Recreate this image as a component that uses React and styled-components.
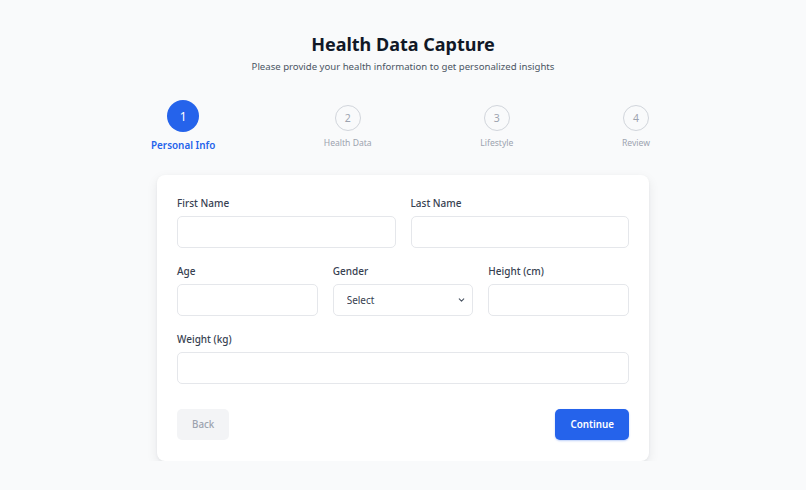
import React from "react";
import styled, { createGlobalStyle, css } from "styled-components";
import { ChevronDown } from "lucide-react";

const GlobalStyle = createGlobalStyle`
  html, body {
    margin: 0;
    padding: 0;
    background: #f9fafb;
    font-family: "Noto Sans", "Open Sans", sans-serif;
    color: #111827;
  }
  * { box-sizing: border-box; }
`;

const Page = styled.div`
  width: 492px;
  margin: 0 auto;
  padding-top: 31px;
`;

const Header = styled.header`
  text-align: center;
`;

const Title = styled.h1`
  margin: 0;
  font-size: 18px;
  line-height: 26px;
  font-weight: 700;
  color: #111827;
`;

const Subtitle = styled.p`
  margin: 2px 0 0;
  font-size: 9.6px;
  line-height: 16px;
  color: #4b5563;
`;

const Stepper = styled.div`
  display: flex;
  justify-content: space-between;
  align-items: center;
  margin: 25px -1px 0 -6px;
`;

const Step = styled.div`
  display: flex;
  flex-direction: column;
  align-items: center;
  gap: 5px;
`;

const Circle = styled.div`
  width: 26px;
  height: 26px;
  border-radius: 50%;
  border: 1.5px solid #d1d5db;
  color: #9ca3af;
  font-size: 10.5px;
  display: flex;
  align-items: center;
  justify-content: center;
  ${(props) =>
    props.active &&
    css`
      width: 32px;
      height: 32px;
      border: none;
      background: #2563eb;
      color: #fff;
      font-size: 12px;
    `}
`;

const StepLabel = styled.div`
  font-size: 8.6px;
  line-height: 14px;
  color: #9ca3af;
  white-space: nowrap;
  ${(props) =>
    props.active &&
    css`
      font-size: 9.9px;
      line-height: 17px;
      font-weight: 600;
      color: #2563eb;
    `}
`;

const Card = styled.form`
  margin-top: 21px;
  background: #fff;
  border-radius: 8px;
  box-shadow: 0 4px 12px rgba(17, 24, 39, 0.08), 0 1px 3px rgba(17, 24, 39, 0.05);
  padding: 20px 20px 21px;
  display: flex;
  flex-direction: column;
  gap: 15px;
`;

const Row = styled.div`
  display: grid;
  grid-template-columns: repeat(${(props) => props.cols || 1}, 1fr);
  gap: 15px;
`;

const Field = styled.label`
  display: flex;
  flex-direction: column;
  gap: 4px;
`;

const Label = styled.span`
  font-size: 10px;
  line-height: 17px;
  font-weight: 500;
  color: #374151;
`;

const inputStyles = css`
  height: 32px;
  width: 100%;
  border: 1px solid #e5e7eb;
  border-radius: 5px;
  background: #fff;
  font-family: inherit;
  font-size: 10px;
  color: #374151;
  padding: 0 10px;
  outline: none;
`;

const Input = styled.input`
  ${inputStyles};
`;

const SelectWrap = styled.div`
  position: relative;
  display: flex;
`;

const Select = styled.select`
  ${inputStyles};
  appearance: none;
  padding: 0 20px 0 13px;
`;

const Chevron = styled(ChevronDown)`
  position: absolute;
  right: 7px;
  top: 50%;
  transform: translateY(-50%);
  color: #4b5563;
  pointer-events: none;
`;

const Actions = styled.div`
  display: flex;
  justify-content: space-between;
  margin-top: 10px;
`;

const Button = styled.button`
  height: 31px;
  border: none;
  border-radius: 5px;
  font-family: inherit;
  font-size: 9.8px;
  font-weight: 600;
  padding: 0 15px;
  background: #2563eb;
  color: #fff;
  box-shadow: 0 1px 2px rgba(37, 99, 235, 0.3);
  ${(props) =>
    props.muted &&
    css`
      background: #f3f4f6;
      color: #9ca3af;
      box-shadow: none;
      font-weight: 500;
    `}
`;

const steps = ["Personal Info", "Health Data", "Lifestyle", "Review"];

export default function App() {
  return (
    <>
      <GlobalStyle />
      <Page>
        <Header>
          <Title>Health Data Capture</Title>
          <Subtitle>
            Please provide your health information to get personalized insights
          </Subtitle>
        </Header>
        <Stepper>
          {steps.map((s, i) => (
            <Step key={s}>
              <Circle active={i === 0}>{i + 1}</Circle>
              <StepLabel active={i === 0}>{s}</StepLabel>
            </Step>
          ))}
        </Stepper>
        <Card onSubmit={(e) => e.preventDefault()}>
          <Row cols={2}>
            <Field>
              <Label>First Name</Label>
              <Input type="text" />
            </Field>
            <Field>
              <Label>Last Name</Label>
              <Input type="text" />
            </Field>
          </Row>
          <Row cols={3}>
            <Field>
              <Label>Age</Label>
              <Input type="number" />
            </Field>
            <Field>
              <Label>Gender</Label>
              <SelectWrap>
                <Select defaultValue="">
                  <option value="">Select</option>
                  <option value="male">Male</option>
                  <option value="female">Female</option>
                  <option value="other">Other</option>
                </Select>
                <Chevron size={9} strokeWidth={3} />
              </SelectWrap>
            </Field>
            <Field>
              <Label>Height (cm)</Label>
              <Input type="number" />
            </Field>
          </Row>
          <Row>
            <Field>
              <Label>Weight (kg)</Label>
              <Input type="number" />
            </Field>
          </Row>
          <Actions>
            <Button type="button" muted>
              Back
            </Button>
            <Button type="submit">Continue</Button>
          </Actions>
        </Card>
      </Page>
    </>
  );
}
